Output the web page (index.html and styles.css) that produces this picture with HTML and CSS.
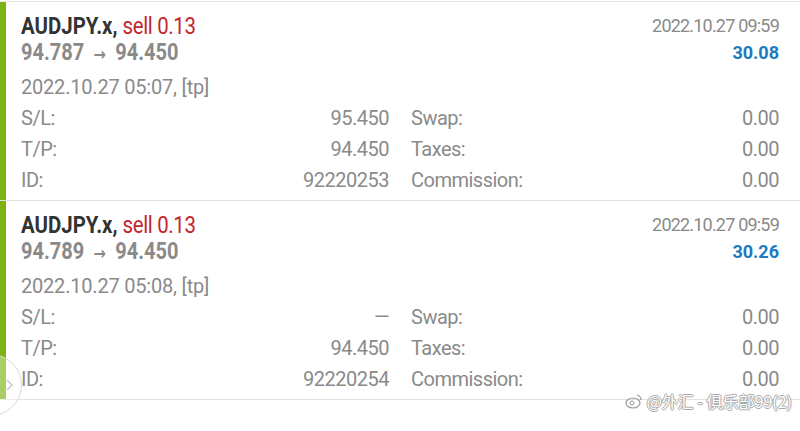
FILE: index.html
```html
<!DOCTYPE html>
<html>
<head>
<meta charset="utf-8">
<link rel="stylesheet" href="styles.css">
</head>
<body>
<div class="list">
  <div class="order">
    <div class="bar"></div>
    <div class="content">
      <div class="head">
        <div class="head-left">
          <div class="title"><span class="sym">AUDJPY.x,</span> <span class="sell">sell 0.13</span></div>
          <div class="prices">94.787 <span class="arrow">→</span> 94.450</div>
        </div>
        <div class="head-right">
          <div class="close-time">2022.10.27 09:59</div>
          <div class="profit">30.08</div>
        </div>
      </div>
      <div class="open-time">2022.10.27 05:07, [tp]</div>
      <div class="grid">
        <div class="cell"><span>S/L:</span><span>95.450</span></div>
        <div class="cell"><span>Swap:</span><span>0.00</span></div>
        <div class="cell"><span>T/P:</span><span>94.450</span></div>
        <div class="cell"><span>Taxes:</span><span>0.00</span></div>
        <div class="cell"><span>ID:</span><span>92220253</span></div>
        <div class="cell"><span>Commission:</span><span>0.00</span></div>
      </div>
    </div>
  </div>
  <div class="order">
    <div class="bar"></div>
    <div class="content">
      <div class="head">
        <div class="head-left">
          <div class="title"><span class="sym">AUDJPY.x,</span> <span class="sell">sell 0.13</span></div>
          <div class="prices">94.789 <span class="arrow">→</span> 94.450</div>
        </div>
        <div class="head-right">
          <div class="close-time">2022.10.27 09:59</div>
          <div class="profit">30.26</div>
        </div>
      </div>
      <div class="open-time">2022.10.27 05:08, [tp]</div>
      <div class="grid">
        <div class="cell"><span>S/L:</span><span>—</span></div>
        <div class="cell"><span>Swap:</span><span>0.00</span></div>
        <div class="cell"><span>T/P:</span><span>94.450</span></div>
        <div class="cell"><span>Taxes:</span><span>0.00</span></div>
        <div class="cell"><span>ID:</span><span>92220254</span></div>
        <div class="cell"><span>Commission:</span><span>0.00</span></div>
      </div>
    </div>
  </div>
</div>
<div class="handle">
  <svg width="40" height="64" viewBox="0 0 40 64"><path d="M8 27 L13 32 L8 37" fill="none" stroke="#c8c8c8" stroke-width="1.5"/></svg>
</div>
<div class="watermark">
  <svg class="wm-icon" width="18" height="16" viewBox="0 0 18 16"><ellipse cx="8" cy="10" rx="7" ry="5" fill="none" stroke="#999" stroke-width="1.2"/><circle cx="7" cy="10" r="2" fill="none" stroke="#999" stroke-width="1"/><path d="M12 2 Q16 3 16 7" fill="none" stroke="#999" stroke-width="1.2"/></svg>
  <span>@外汇 - 俱乐部99(2)</span>
</div>
</body>
</html>
```
FILE: styles.css
```css
html, body {
  margin: 0;
  padding: 0;
  background: #ffffff;
}
body {
  width: 800px;
  height: 431px;
  overflow: hidden;
  position: relative;
  font-family: Roboto, "Noto Sans", sans-serif;
  color: #8a8a8a;
}
.list {
  border-top: 1px solid #e6e6e6;
  margin-top: 1px;
}
.order {
  display: flex;
  border-bottom: 1px solid #e2e2e2;
}
.bar {
  width: 6px;
  background: #7db413;
  flex: none;
}
.content {
  flex: 1;
  padding: 10px 21px 4px 15px;
}
.head {
  display: flex;
  justify-content: space-between;
}
.title {
  font-size: 24px;
  line-height: 28px;
  font-weight: 700;
  white-space: nowrap;
  transform: scaleX(0.85);
  transform-origin: left center;
}
.sym {
  color: #333333;
}
.sell {
  color: #c3262c;
  font-weight: 400;
  letter-spacing: -0.4px;
}
.prices {
  height: 26px;
  font-size: 23px;
  line-height: 26px;
  font-weight: 700;
  color: #8a8a8a;
  white-space: nowrap;
  transform: scaleX(0.87);
  transform-origin: left center;
}
.arrow {
  font-family: "DejaVu Sans", sans-serif;
  font-size: 17px;
  line-height: 0;
  font-weight: 700;
  margin: 0 5px;
}
.head-right {
  text-align: right;
}
.close-time {
  font-size: 18px;
  line-height: 28px;
  color: #8a8a8a;
  letter-spacing: -0.8px;
}
.profit {
  font-size: 18px;
  line-height: 26px;
  font-weight: 700;
  color: #1b7bc2;
}
.open-time {
  margin-top: 6px;
  font-size: 20px;
  line-height: 31px;
  letter-spacing: -0.2px;
}
.grid {
  display: grid;
  grid-template-columns: 1fr 1fr;
  column-gap: 22px;
}
.cell {
  display: flex;
  justify-content: space-between;
  font-size: 20px;
  line-height: 31px;
  letter-spacing: -0.5px;
}
.handle {
  position: absolute;
  left: -40px;
  top: 354px;
  width: 62px;
  height: 62px;
  border: 1.5px solid #dadada;
  border-radius: 50%;
  background: rgba(255,255,255,0.35);
  box-sizing: border-box;
}
.handle svg {
  position: absolute;
  left: 38px;
  top: -2px;
}
.watermark {
  position: absolute;
  right: 8px;
  top: 393px;
  display: flex;
  align-items: center;
  gap: 4px;
  font-family: "Noto Sans CJK SC", sans-serif;
  font-size: 16px;
  line-height: 14px;
  color: #ffffff;
  text-shadow: -1px 0 #aaa, 1px 0 #aaa, 0 -1px #aaa, 0 1px #aaa;
}
```
